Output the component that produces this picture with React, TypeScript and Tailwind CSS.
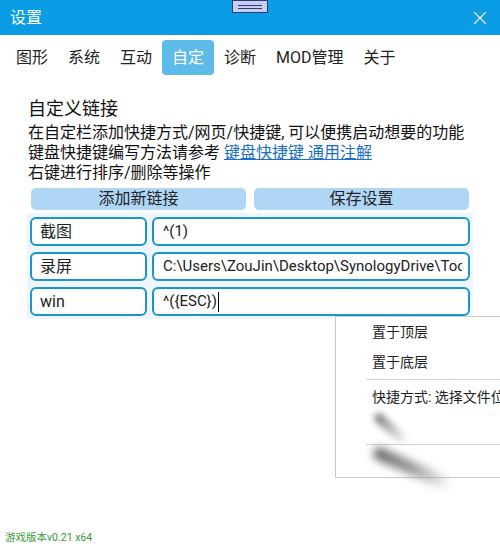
import { X } from 'lucide-react'

const tabs = ['图形', '系统', '互动', '自定', '诊断', 'MOD管理', '关于']

const links = [
  { name: '截图', value: '^(1)' },
  { name: '录屏', value: 'C:\\Users\\ZouJin\\Desktop\\SynologyDrive\\Tools\\ScreenRecorder.exe' },
  { name: 'win', value: '^({ESC})', editing: true },
]

function TitleBar() {
  return (
    <div className="relative flex h-[35px] items-center justify-between bg-[#0a9de5] pl-[10px] pr-[9px]">
      <span className="text-[16px] text-white">设置</span>
      <div className="absolute left-[232px] top-0 flex h-[13px] w-[36px] flex-col items-center justify-center gap-[2px] border border-[#2b3d6e] bg-[#c9cdf3]">
        <div className="h-px w-[24px] bg-[#2b3d6e]" />
        <div className="h-px w-[24px] bg-[#2b3d6e]" />
      </div>
      <X className="text-white" size={22} strokeWidth={1.2} />
    </div>
  )
}

function Tabs() {
  return (
    <div className="mt-[5px] flex h-[35px] pl-[6px]">
      {tabs.map((t) => (
        <div
          key={t}
          className={
            t === '自定'
              ? 'flex items-center rounded-[4px] bg-[#5cbbe9] px-[10px] text-[16px] text-white'
              : 'flex items-center px-[10px] text-[16px] text-[#222]'
          }
        >
          {t}
        </div>
      ))}
    </div>
  )
}

function ContextMenu() {
  return (
    <div className="absolute left-[335px] top-[316px] w-[200px] border border-[#c9c9c9] bg-white text-[14px] text-[#222]">
      <div className="flex h-[30px] items-center pl-[36px]">置于顶层</div>
      <div className="flex h-[30px] items-center pl-[36px]">置于底层</div>
      <div className="my-[2px] ml-[30px] h-px bg-[#d4d4d4]" />
      <div className="flex h-[30px] items-center whitespace-nowrap pl-[36px]">快捷方式: 选择文件位置</div>
      <div className="relative h-[30px]">
        <div className="absolute left-[34px] top-[12px] h-[10px] w-[42px] rotate-[42deg] rounded-full bg-gradient-to-r from-[#777] to-transparent blur-[3px]" />
      </div>
      <div className="my-[2px] ml-[30px] h-px bg-[#d4d4d4]" />
      <div className="relative h-[30px]">
        <div className="absolute left-[34px] top-[15px] h-[13px] w-[85px] rotate-[24deg] rounded-full bg-gradient-to-r from-[#666] via-[#999] to-transparent blur-[4px]" />
      </div>
    </div>
  )
}

export default function App() {
  return (
    <div className="relative flex h-[550px] w-[500px] flex-col overflow-hidden bg-white font-['Roboto','Noto_Sans_CJK_SC',sans-serif]">
      <TitleBar />
      <Tabs />

      <div className="mt-[22px] pl-[28px] text-[#111]">
        <h2 className="text-[18px] leading-[24px]">自定义链接</h2>
        <div className="mt-[2px] text-[16px] leading-[20px]">
          <p>在自定栏添加快捷方式/网页/快捷键, 可以便携启动想要的功能</p>
          <p>
            键盘快捷键编写方法请参考{' '}
            <a className="text-[#1a6fc6] underline">键盘快捷键 通用注解</a>
          </p>
          <p>右键进行排序/删除等操作</p>
        </div>
      </div>

      <div className="mt-[5px] flex gap-[8px] pl-[31px] pr-[31px] text-[16px] text-[#222]">
        <button className="h-[22px] flex-1 rounded-[5px] bg-[#b0d6f6] leading-[22px]">添加新链接</button>
        <button className="h-[22px] flex-1 rounded-[5px] bg-[#b0d6f6] leading-[22px]">保存设置</button>
      </div>

      <div className="ml-[27px] mt-[3px] flex w-[446px] flex-col gap-[6px] bg-[#eef5fd] pb-[3px] pl-[3px] pr-[3px] pt-[4px]">
        {links.map((l) => (
          <div key={l.name} className="flex h-[29px] gap-[5px]">
            <div className="flex w-[117px] items-center rounded-[6px] border-2 border-[#1b96cc] bg-white pl-[8px] text-[16px] text-[#222]">
              {l.name}
            </div>
            <div className="flex flex-1 items-center overflow-hidden whitespace-nowrap rounded-[6px] border-2 border-[#1b96cc] bg-white pl-[9px] pr-[6px] text-[15px] text-[#222]">
              <span className="overflow-hidden">{l.value}</span>
              {l.editing && <span className="ml-px h-[20px] w-px bg-black" />}
            </div>
          </div>
        ))}
      </div>

      <div className="mt-auto pb-[5px] pl-[5px] text-[10.5px] leading-[14px] text-[#3a9a3a]">游戏版本v0.21 x64</div>

      <ContextMenu />
    </div>
  )
}
